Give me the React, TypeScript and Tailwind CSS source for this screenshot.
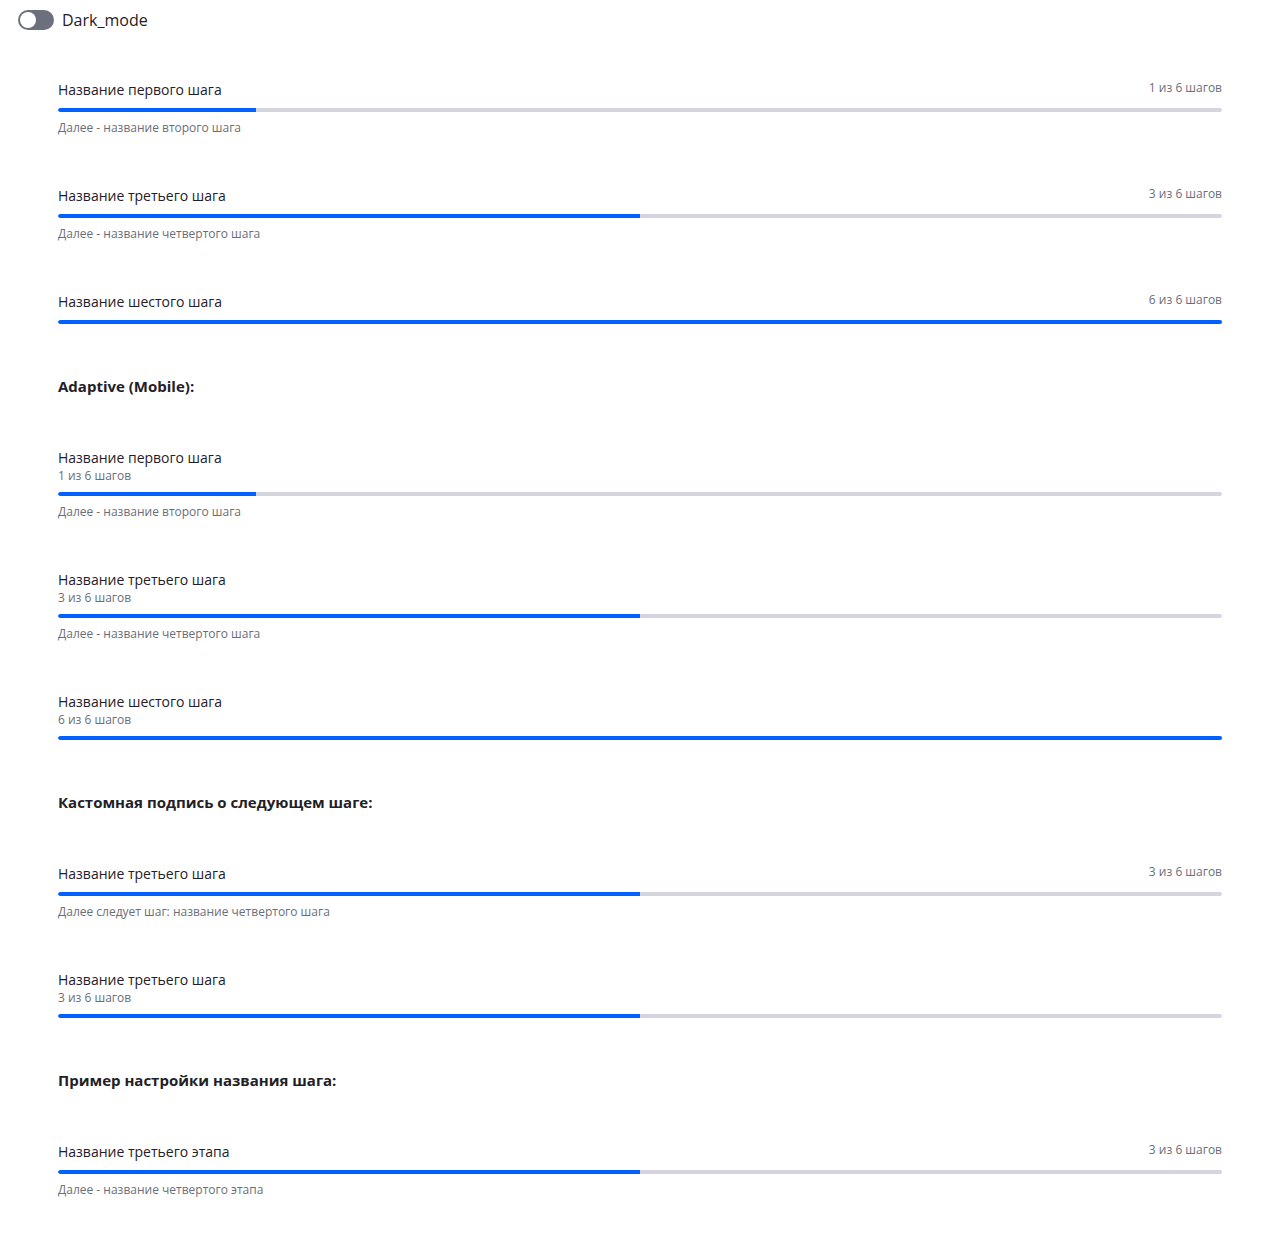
import { useState } from "react"

type Step = {
  title: string
  counter: string
  progress: number
  caption?: string
  mobile?: boolean
}

function ProgressStep({ title, counter, progress, caption, mobile }: Step) {
  return (
    <div className="flex flex-col">
      {mobile ? (
        <div className="flex flex-col">
          <span className="text-sm leading-5 text-[#1f2126]">{title}</span>
          <span className="text-xs leading-4 text-[#6b6e78]">{counter}</span>
        </div>
      ) : (
        <div className="flex justify-between items-start">
          <span className="text-sm leading-5 text-[#1f2126]">{title}</span>
          <span className="text-xs leading-4 text-[#6b6e78]">{counter}</span>
        </div>
      )}
      <div className="mt-2 h-1 w-full rounded-full bg-[#d5d6dd] overflow-hidden">
        <div className="h-full bg-[#0061ff] rounded-l-full" style={{ width: `${progress}%` }} />
      </div>
      {caption && <span className="mt-2 text-xs leading-4 text-[#6b6e78]">{caption}</span>}
    </div>
  )
}

function Heading({ children }: { children: string }) {
  return <h2 className="text-[15px] leading-6 font-bold text-[#1f2126]">{children}</h2>
}

export default function App() {
  const [dark, setDark] = useState(false)

  return (
    <div className="min-h-[1248px] bg-white font-['Open_Sans',sans-serif]">
      <label className="flex items-center gap-2 pl-[18px] pt-2 h-8 cursor-pointer select-none">
        <button
          onClick={() => setDark(!dark)}
          className="relative w-9 h-5 rounded-full bg-[#6c707c]"
        >
          <span className="absolute left-[2px] top-[2px] w-4 h-4 rounded-full bg-white" />
        </button>
        <span className="text-base text-[#1f2126]">Dark_mode</span>
      </label>

      <main className="flex flex-col gap-[50px] px-[58px] pt-[48px] pb-10">
        <ProgressStep title="Название первого шага" counter="1 из 6 шагов" progress={17} caption="Далее - название второго шага" />
        <ProgressStep title="Название третьего шага" counter="3 из 6 шагов" progress={50} caption="Далее - название четвертого шага" />
        <ProgressStep title="Название шестого шага" counter="6 из 6 шагов" progress={100} />

        <Heading>Adaptive (Mobile):</Heading>

        <ProgressStep mobile title="Название первого шага" counter="1 из 6 шагов" progress={17} caption="Далее - название второго шага" />
        <ProgressStep mobile title="Название третьего шага" counter="3 из 6 шагов" progress={50} caption="Далее - название четвертого шага" />
        <ProgressStep mobile title="Название шестого шага" counter="6 из 6 шагов" progress={100} />

        <Heading>Кастомная подпись о следующем шаге:</Heading>

        <ProgressStep title="Название третьего шага" counter="3 из 6 шагов" progress={50} caption="Далее следует шаг: название четвертого шага" />
        <ProgressStep mobile title="Название третьего шага" counter="3 из 6 шагов" progress={50} />

        <Heading>Пример настройки названия шага:</Heading>

        <ProgressStep title="Название третьего этапа" counter="3 из 6 шагов" progress={50} caption="Далее - название четвертого этапа" />
      </main>
    </div>
  )
}
